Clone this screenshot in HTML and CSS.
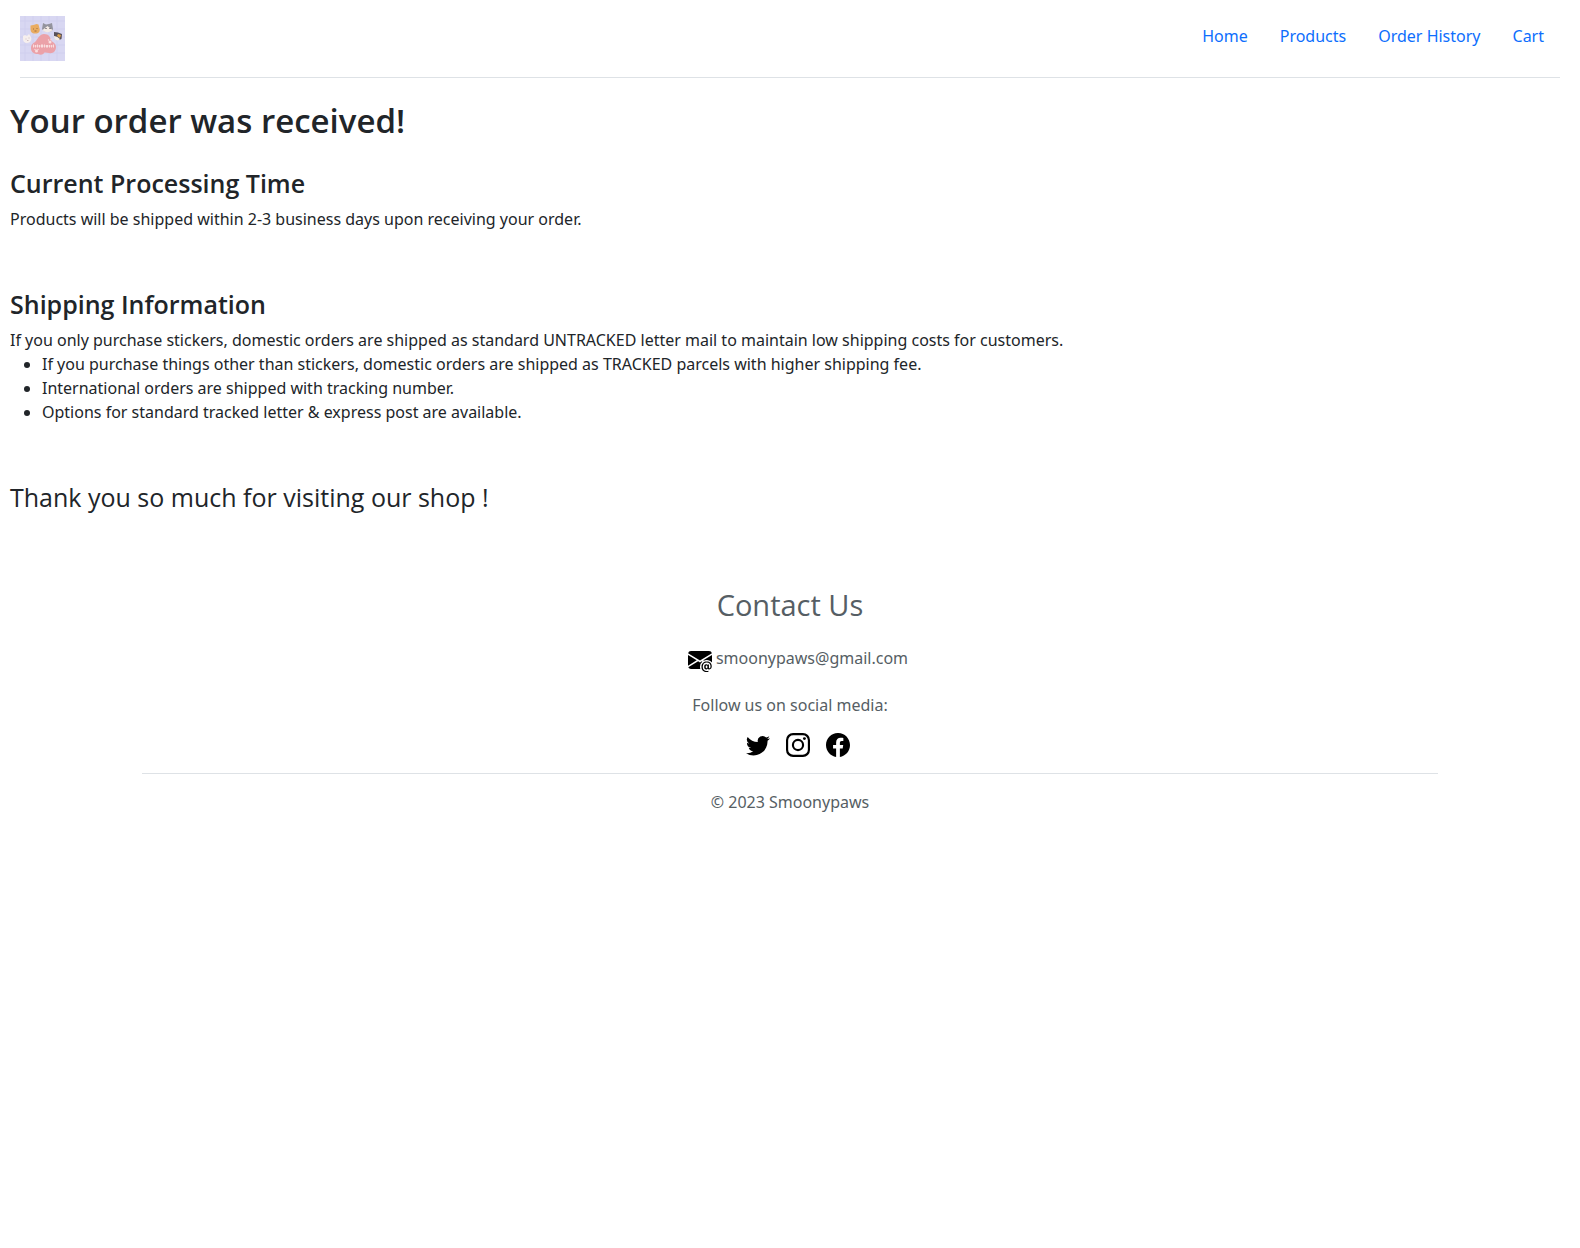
FILE: index.html
```html
<!DOCTYPE html>
<html lang="en">
<head>
<meta charset="utf-8">
<meta name="viewport" content="width=device-width, initial-scale=1">
<title>Smoonypaws - Order received</title>
<link rel="stylesheet" href="styles.css">
</head>
<body>
<header class="site-header">
  <a class="brand" href="#" aria-label="Smoonypaws">
    <svg class="logo" viewBox="0 0 45 45" aria-hidden="true">
      <rect width="45" height="45" fill="#d8d7f2"/>
      <path d="M5 0v45M13 0v45M21 0v45M29 0v45M37 0v45M0 5h45M0 13h45M0 21h45M0 29h45M0 37h45" stroke="#d0cfee" stroke-width="1"/>
      <path d="M24 18c5 0 6 3 7 6 1 2 5 3 5 7s-3 7-7 6c-2 0-4-1-5 0-1 2-4 2-6 1-4 0-7-2-7-6s3-5 5-7c2-3 4-7 8-7z" fill="#eba1a8"/>
      <g fill="#f9dedf">
        <path d="M13 28.500h1v3h-1zM15 29h1v2.500h-1zM17 28.500h1v3h-1zM19 29h1v2.500h-1zM21 28.500h2v3h-2zM24 28.500h1v3h-1zM26 29h2v2.500h-2zM29 29h1v2.500h-1zM31 29h1v2.500h-1zM33 28.500h1v3h-1z"/>
        <path d="M13 29.500h21v1H13z" opacity=".6"/>
        <circle cx="30" cy="26" r="1.500"/><circle cx="28.500" cy="24" r=".7"/><circle cx="31" cy="23.500" r=".7"/>
        <circle cx="16.500" cy="35" r="1.500"/><circle cx="15" cy="33.500" r=".7"/><circle cx="18" cy="33.500" r=".7"/>
      </g>
      <path d="M3 20l2-1 2 1 2-2 2 3c1 3-1 6-4 6s-4-2-4-4z" fill="#f6efee"/>
      <path d="M5.500 23h1M8.500 22h1M7 24.500h1.500" stroke="#c9b3b3" stroke-width=".8"/>
      <path d="M10.500 9.500l3-.5 3-1 2 .5 1 4c1 3-1 5-4 5-4 0-5-2-5-5z" fill="#e9ac62"/>
      <path d="M13 13h1M16.500 12.500h1M14.500 15h2" stroke="#9b6738" stroke-width=".9"/>
      <path d="M23 7l3 1.500 3-.5 3-1 1 6c-1 4-9 4-11 0z" fill="#93939d"/>
      <path d="M27.500 10l5 4c-2 3-8 3-10 0z" fill="#f3eae5"/>
      <path d="M25.500 12.500h1M29.500 12.500h1" stroke="#403b42"/>
      <path d="M34 16l4 .5 4 1.500-.5 5c-3 2-6 0-7.500-3z" fill="#59515a"/>
      <path d="M38 18l3 1-1 3-3-2z" fill="#e0a249"/>
      <path d="M34.500 20l3 1 2.500 2c-2 3-6 1-6-3z" fill="#f5ebe5"/>
    </svg>
  </a>
  <nav class="nav" aria-label="Main">
    <a href="#">Home</a>
    <a href="#">Products</a>
    <a href="#">Order History</a>
    <a href="#">Cart</a>
  </nav>
</header>

<main class="content">
  <h1>Your order was received!</h1>
  <section class="info">
    <h2>Current Processing Time</h2>
    <p>Products will be shipped within 2-3 business days upon receiving your order.</p>
  </section>
  <section class="info">
    <h2>Shipping Information</h2>
    <p>If you only purchase stickers, domestic orders are shipped as standard UNTRACKED letter mail to maintain low shipping costs for customers.</p>
    <ul>
      <li>If you purchase things other than stickers, domestic orders are shipped as TRACKED parcels with higher shipping fee.</li>
      <li>International orders are shipped with tracking number.</li>
      <li>Options for standard tracked letter &amp; express post are available.</li>
    </ul>
  </section>
  <p class="thanks">Thank you so much for visiting our shop !</p>
</main>

<footer class="site-footer">
  <h2>Contact Us</h2>
  <p class="email">
    <svg class="icon" viewBox="0 0 16 16" aria-hidden="true"><path d="M2 2A2 2 0 0 0 .05 3.555L8 8.414l7.950-4.859A2 2 0 0 0 14 2H2Zm-2 9.800V4.698l5.803 3.546L0 11.801Zm6.761-2.970-6.570 4.026A2 2 0 0 0 2 14h6.256A4.493 4.493 0 0 1 8 12.500a4.490 4.490 0 0 1 1.606-3.446l-.367-.225L8 9.586l-1.239-.757ZM16 9.671V4.697l-5.803 3.546.338.208A4.482 4.482 0 0 1 12.500 8c1.414 0 2.675.652 3.500 1.671Z"/><path d="M15.834 12.244c0 1.168-.577 2.025-1.587 2.025-.503 0-1.002-.228-1.120-.648h-.043c-.118.416-.543.643-1.015.643-.770 0-1.259-.542-1.259-1.434v-.529c0-.844.481-1.400 1.260-1.400.585 0 .870.333.953.630h.030v-.568h.905v2.190c0 .272.180.420.411.420.315 0 .639-.415.639-1.390v-.118c0-1.277-.950-2.326-2.484-2.326h-.040c-1.582 0-2.640 1.067-2.640 2.724v.157c0 1.867 1.237 2.654 2.570 2.654h.045c.507 0 .935-.070 1.180-.180v.731c-.219.100-.643.175-1.237.175h-.044C10.438 16 9 14.820 9 12.646v-.214C9 10.360 10.421 9 12.485 9h.035c2.120 0 3.314 1.430 3.314 3.034v.210Zm-4.040.210v.227c0 .586.227.800.581.800.310 0 .564-.170.564-.743v-.367c0-.516-.275-.708-.572-.708-.346 0-.573.245-.573.791Z"/></svg>
    <span>smoonypaws@gmail.com</span>
  </p>
  <p class="follow">Follow us on social media:</p>
  <div class="social">
    <a href="#" aria-label="Twitter"><svg class="icon" viewBox="0 0 16 16" aria-hidden="true"><path d="M5.026 15c6.038 0 9.341-5.003 9.341-9.334 0-.140 0-.282-.006-.422A6.685 6.685 0 0 0 16 3.542a6.658 6.658 0 0 1-1.889.518 3.301 3.301 0 0 0 1.447-1.817 6.533 6.533 0 0 1-2.087.793A3.286 3.286 0 0 0 7.875 6.030a9.325 9.325 0 0 1-6.767-3.429 3.289 3.289 0 0 0 1.018 4.382A3.323 3.323 0 0 1 .640 6.575v.045a3.288 3.288 0 0 0 2.632 3.218 3.203 3.203 0 0 1-.865.115 3.230 3.230 0 0 1-.614-.057 3.283 3.283 0 0 0 3.067 2.277A6.588 6.588 0 0 1 .780 13.580a6.320 6.320 0 0 1-.780-.045A9.344 9.344 0 0 0 5.026 15z"/></svg></a>
    <a href="#" aria-label="Instagram"><svg class="icon" viewBox="0 0 16 16" aria-hidden="true"><path fill-rule="evenodd" d="M4.700 0h6.600A4.700 4.700 0 0 1 16 4.700v6.600a4.700 4.700 0 0 1-4.700 4.700H4.700A4.700 4.700 0 0 1 0 11.300V4.700A4.700 4.700 0 0 1 4.700 0zm.100 1.440A3.360 3.360 0 0 0 1.440 4.800v6.400a3.360 3.360 0 0 0 3.360 3.360h6.400a3.360 3.360 0 0 0 3.360-3.360V4.800a3.360 3.360 0 0 0-3.360-3.360H4.800zM8 3.892a4.108 4.108 0 1 1 0 8.216 4.108 4.108 0 0 1 0-8.216zm0 1.441a2.667 2.667 0 1 0 0 5.334 2.667 2.667 0 0 0 0-5.334z"/><circle cx="12.270" cy="3.730" r=".960"/></svg></a>
    <a href="#" aria-label="Facebook"><svg class="icon" viewBox="0 0 16 16" aria-hidden="true"><path d="M16 8.049c0-4.446-3.582-8.050-8-8.050C3.580 0-.002 3.603-.002 8.050c0 4.017 2.926 7.347 6.750 7.951v-5.625h-2.030V8.050H6.750V6.275c0-2.017 1.195-3.131 3.022-3.131.876 0 1.791.157 1.791.157v1.980h-1.009c-.993 0-1.303.621-1.303 1.258v1.510h2.218l-.354 2.326H9.250V16c3.824-.604 6.750-3.934 6.750-7.951z"/></svg></a>
  </div>
  <p class="copyright">© 2023 Smoonypaws</p>
</footer>
</body>
</html>
```
FILE: styles.css
```css
*, *::before, *::after { box-sizing: border-box; }

body {
  margin: 0;
  font-family: "Noto Sans", "Open Sans", sans-serif;
  font-size: 16px;
  line-height: 24px;
  color: #212529;
  background: #fff;
}

h1, h2, p, ul { margin: 0; }
h1, h2, .thanks { font-family: "Open Sans", "Noto Sans", sans-serif; }
a { color: #0d6efd; text-decoration: none; }

.site-header {
  display: flex;
  justify-content: space-between;
  align-items: flex-start;
  margin: 0 20px 24px;
  padding: 16px 0;
  border-bottom: 1px solid #dee2e6;
}
.brand, .logo { display: block; }
.logo { width: 45px; height: 45px; }
.nav { display: flex; }
.nav a { padding: 8px 16px; }

.content { padding: 0 10px; }
h1 { font-size: 33px; line-height: 38px; font-weight: 600; margin-bottom: 26px; }
.info { margin-bottom: 56px; }
.info h2 { font-size: 25px; line-height: 34px; font-weight: 600; margin-bottom: 7px; }
.info ul { padding-left: 32px; }
.thanks { font-size: 25px; line-height: 34px; }

.site-footer {
  width: 82%;
  max-width: 1296px;
  margin: 71px auto 0;
  text-align: center;
  color: #565e64;
}
.site-footer h2 { font-size: 29px; line-height: 40px; font-weight: 400; margin-bottom: 21px; }
.icon { display: block; width: 24px; height: 24px; fill: #000; }
.email { display: flex; justify-content: center; gap: 4px; padding-left: 16px; margin-bottom: 21px; }
.email .icon { margin-top: 2px; }
.follow { margin-bottom: 16px; }
.social {
  display: flex;
  justify-content: center;
  gap: 16px;
  padding: 0 0 16px 16px;
  border-bottom: 1px solid #dee2e6;
}
.copyright { padding: 16px 0; }
```
